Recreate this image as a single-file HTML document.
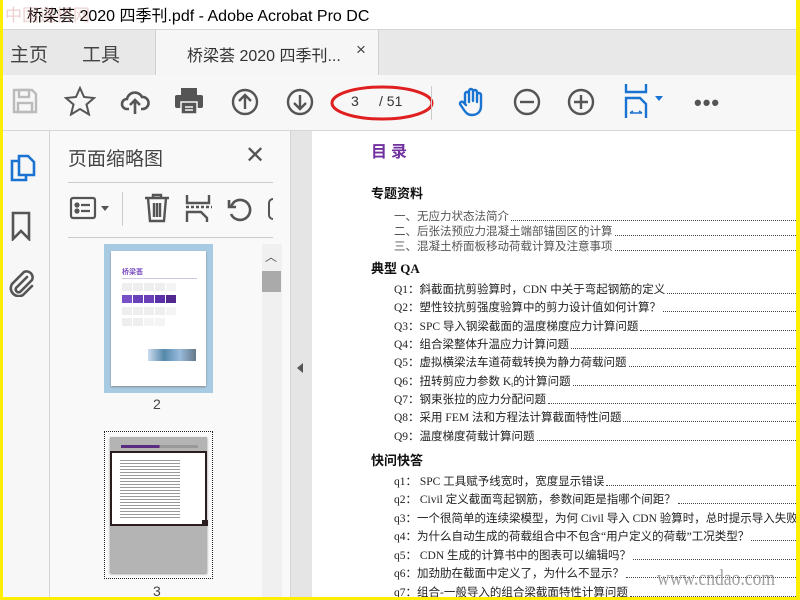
<!DOCTYPE html>
<html><head><meta charset="utf-8">
<style>
*{margin:0;padding:0;box-sizing:border-box}
body{width:800px;height:600px;overflow:hidden;background:#fff;font-family:"Liberation Sans","Noto Sans CJK SC",sans-serif;position:relative}
.abs{position:absolute}
.ico{position:absolute}
.doc .row{position:absolute;display:flex;align-items:flex-end;font-family:"Liberation Serif","Noto Sans CJK SC",serif;font-size:11.5px;color:#222;white-space:nowrap;right:0}
.doc .row .dots{flex:1;border-bottom:1px dotted #444;margin-left:2px;margin-bottom:3px}
.doc h3{position:absolute;font-size:13px;font-weight:bold;color:#111;font-family:"Liberation Serif","Noto Sans CJK SC",serif}
.tile{position:absolute;width:10px;height:8px}
</style></head><body>
<div class="abs" style="left:0;top:0;width:3px;height:600px;background:#ffee00;z-index:9"></div>
<div class="abs" style="right:0;top:0;width:4px;height:600px;background:#ffee00;z-index:9"></div>
<div class="abs" style="left:0;bottom:0;width:800px;height:3px;background:#ffee00;z-index:9"></div>
<div class="abs" style="left:27px;top:2px;font-size:16px;color:#000">桥梁荟 2020 四季刊.pdf - Adobe Acrobat Pro DC</div>
<div class="abs" style="left:5px;top:1px;font-size:17px;color:rgba(200,120,120,.35)">中国道桥网</div>
<div class="abs" style="left:3px;top:29px;width:793px;height:46px;background:#e8e8e8;border-top:1px solid #d6d6d6"></div>
<div class="abs" style="left:10px;top:40px;font-size:19px;color:#444">主页</div>
<div class="abs" style="left:82px;top:40px;font-size:19px;color:#444">工具</div>
<div class="abs" style="left:155px;top:30px;width:224px;height:45px;background:#f6f6f6;border-left:1px solid #d0d0d0;border-right:1px solid #d0d0d0"></div>
<div class="abs" style="left:187px;top:42px;font-size:16px;color:#333">桥梁荟 2020 四季刊...</div>
<div class="abs" style="left:356px;top:40px;font-size:17px;color:#444">×</div>
<div class="abs" style="left:3px;top:75px;width:793px;height:56px;background:#f7f7f7;border-bottom:1px solid #d6d6d6"></div>
<svg class="ico" style="left:10px;top:86px" width="30" height="30" viewBox="0 0 30 30" fill="none" stroke="#bbb" stroke-width="2.4"><path d="M4 4h18l4 4v18H4z"/><rect x="9" y="4" width="10" height="7"/><rect x="8" y="17" width="14" height="9"/></svg>
<svg class="ico" style="left:64px;top:86px" width="32" height="30" viewBox="0 0 32 30" fill="none" stroke="#555" stroke-width="2"><path d="M16 2l4 9 10 1-7.5 6.5 2.5 10L16 23l-9 5.5 2.5-10L2 12l10-1z"/></svg>
<svg class="ico" style="left:120px;top:87px" width="30" height="30" viewBox="0 0 30 30" fill="none" stroke="#555" stroke-width="2.6"><path d="M9 22H7a5 5 0 0 1 0-10 8 8 0 0 1 15-2 6 6 0 0 1 1 12h-2"/><path d="M15 27V13M10 18l5-5 5 5"/></svg>
<svg class="ico" style="left:174px;top:86px" width="30" height="30" viewBox="0 0 30 30"><rect x="7" y="2" width="16" height="7" fill="#555"/><rect x="1" y="9" width="28" height="13" rx="2" fill="#555"/><rect x="7" y="16" width="16" height="12" fill="#555" stroke="#f7f7f7" stroke-width="1.5"/><path d="M11 21h8M11 24h8" stroke="#f7f7f7" stroke-width="1.5"/></svg>
<svg class="ico" style="left:231px;top:88px" width="28" height="28" viewBox="0 0 28 28" fill="none" stroke="#555" stroke-width="2.4"><circle cx="14" cy="14" r="12"/><path d="M14 21V7M8 13l6-6 6 6"/></svg>
<svg class="ico" style="left:286px;top:88px" width="28" height="28" viewBox="0 0 28 28" fill="none" stroke="#555" stroke-width="2.4"><circle cx="14" cy="14" r="12"/><path d="M14 7v14M8 15l6 6 6-6"/></svg>
<div class="abs" style="left:351px;top:93px;font-size:14px;color:#333">3</div>
<div class="abs" style="left:379px;top:93px;font-size:14px;color:#333">/ 51</div>
<svg class="ico" style="left:330px;top:82px" width="106" height="42" viewBox="0 0 106 42"><ellipse cx="52" cy="21" rx="50" ry="16" fill="none" stroke="#e02020" stroke-width="3"/></svg>
<div class="abs" style="left:431px;top:86px;width:1px;height:34px;background:#ccc"></div>
<svg class="ico" style="left:456px;top:86px" width="32" height="32" viewBox="0 0 32 32" fill="none" stroke="#1a73d0" stroke-width="2.4" stroke-linecap="round"><path d="M9 18V8a2 2 0 0 1 4 0v8M13 15V5a2 2 0 0 1 4 0v10M17 15V6a2 2 0 0 1 4 0v10M21 16V9a2 2 0 0 1 4 0v11c0 6-4 9-9 9-4 0-6-2-8-5l-4-6a2 2 0 0 1 3-2l3 3"/></svg>
<svg class="ico" style="left:513px;top:88px" width="28" height="28" viewBox="0 0 28 28" fill="none" stroke="#555" stroke-width="2.4"><circle cx="14" cy="14" r="12"/><path d="M7 14h14"/></svg>
<svg class="ico" style="left:567px;top:88px" width="28" height="28" viewBox="0 0 28 28" fill="none" stroke="#555" stroke-width="2.4"><circle cx="14" cy="14" r="12"/><path d="M7 14h14M14 7v14"/></svg>
<svg class="ico" style="left:624px;top:84px" width="40" height="34" viewBox="0 0 40 34" fill="none" stroke="#1a73d0" stroke-width="2.4"><path d="M2 0v8h20V0"/><path d="M2 34V14h14l6 6v14"/><path d="M6 29h12M6 29l3-2M18 29l-3-2" stroke-width="1.6"/><path d="M31 12h8l-4 5z" fill="#1a73d0" stroke="none"/></svg>
<div class="abs" style="left:694px;top:90px;font-size:22px;color:#555;letter-spacing:1px;font-weight:bold">•••</div>
<div class="abs" style="left:3px;top:131px;width:47px;height:469px;background:#f7f7f7;border-right:1px solid #d4d4d4"></div>
<svg class="ico" style="left:9px;top:153px" width="28" height="30" viewBox="0 0 28 30" fill="none" stroke="#1a73d0" stroke-width="2.6"><path d="M10 3h9l6 6v13H10z"/><path d="M10 8H3v19h14v-5"/></svg>
<svg class="ico" style="left:10px;top:211px" width="22" height="30" viewBox="0 0 22 30" fill="none" stroke="#555" stroke-width="2.6"><path d="M3 2h16v26l-8-8-8 8z"/></svg>
<svg class="ico" style="left:7px;top:267px" width="28" height="30" viewBox="0 0 28 30" fill="none" stroke="#555" stroke-width="2.6" stroke-linecap="round"><path d="M20 10L9 21a3 3 0 0 0 4 4l12-12a6 6 0 0 0-8-8L5 17a8 8 0 0 0 11 11l9-9"/></svg>
<div class="abs" style="left:50px;top:131px;width:240px;height:469px;background:#f9f9f9"></div>
<div class="abs" style="left:68px;top:144px;font-size:19px;color:#444">页面缩略图</div>
<div class="abs" style="left:245px;top:141px;font-size:24px;color:#555">✕</div>
<div class="abs" style="left:68px;top:182px;width:205px;height:1px;background:#ccc"></div>
<div class="abs" style="left:68px;top:237px;width:205px;height:1px;background:#ccc"></div>
<svg class="ico" style="left:69px;top:196px" width="44" height="26" viewBox="0 0 44 26" fill="none" stroke="#555" stroke-width="2.2"><rect x="2" y="2" width="24" height="20" rx="2"/><circle cx="8" cy="9" r="1.5" fill="#555"/><circle cx="8" cy="15" r="1.5" fill="#555"/><path d="M12 9h9M12 15h9"/><path d="M32 10h8l-4 5z" fill="#555" stroke="none"/></svg>
<div class="abs" style="left:122px;top:192px;width:1px;height:34px;background:#ccc"></div>
<svg class="ico" style="left:143px;top:193px" width="28" height="30" viewBox="0 0 28 30" fill="none" stroke="#555" stroke-width="2.4"><path d="M2 5h24M10 5V2h8v3M5 5l2 23h14l2-23M11 10v14M14 10v14M17 10v14" /></svg>
<svg class="ico" style="left:185px;top:194px" width="28" height="30" viewBox="0 0 28 30" fill="none" stroke="#555" stroke-width="2.4"><path d="M2 1v8h22V1M2 28V18h14l6 6v4"/><path d="M1 13h26" stroke-dasharray="3 2"/></svg>
<svg class="ico" style="left:226px;top:196px" width="28" height="28" viewBox="0 0 28 28" fill="none" stroke="#555" stroke-width="2.6"><path d="M5 18A10 10 0 1 0 8 6L5 10"/><path d="M3 4v7h7"/></svg>
<div class="abs" style="left:268px;top:198px;width:5px;height:22px;border:2.5px solid #555;border-right:none;border-radius:10px 0 0 10px"></div>
<!-- thumbnail 2 -->
<div class="abs" style="left:104px;top:244px;width:109px;height:149px;background:#a8cbe4"></div>
<div class="abs" style="left:111px;top:251px;width:95px;height:135px;background:#fff;box-shadow:0 1px 2px #888"></div>
<div class="abs" style="left:122px;top:267px;font-size:7px;color:#7b4fc0;font-weight:bold">桥梁荟</div>
<div class="abs" style="left:122px;top:278px;width:75px;height:1px;background:#cfc6e6"></div>
<div class="tile" style="left:122px;top:283px;background:#eee"></div><div class="tile" style="left:133px;top:283px;background:#eee"></div><div class="tile" style="left:144px;top:283px;background:#eee"></div><div class="tile" style="left:155px;top:283px;background:#eee"></div><div class="tile" style="left:166px;top:283px;background:#f4f4f4"></div>
<div class="tile" style="left:122px;top:295px;background:#7a50c8"></div><div class="tile" style="left:133px;top:295px;background:#6a40b8"></div><div class="tile" style="left:144px;top:295px;background:#6a40b8"></div><div class="tile" style="left:155px;top:295px;background:#5a30a8"></div><div class="tile" style="left:166px;top:295px;background:#502890"></div>
<div class="tile" style="left:122px;top:307px;background:#eee"></div><div class="tile" style="left:133px;top:307px;background:#eee"></div><div class="tile" style="left:144px;top:307px;background:#eee"></div><div class="tile" style="left:155px;top:307px;background:#eee"></div><div class="tile" style="left:166px;top:307px;background:#f4f4f4"></div>
<div class="tile" style="left:122px;top:318px;background:#eee"></div><div class="tile" style="left:133px;top:318px;background:#eee"></div><div class="tile" style="left:144px;top:318px;background:#f4f4f4"></div><div class="tile" style="left:155px;top:318px;background:#f4f4f4"></div>
<div class="abs" style="left:148px;top:349px;width:48px;height:12px;background:linear-gradient(90deg,#cde,#58a,#9bd,#678)"></div>
<div class="abs" style="left:153px;top:396px;font-size:14px;color:#444">2</div>
<!-- thumbnail 3 -->
<div class="abs" style="left:104px;top:431px;width:109px;height:148px;border:1px dotted #222"></div>
<div class="abs" style="left:110px;top:437px;width:97px;height:136px;background:#b4b4b4;box-shadow:0 1px 2px #888"></div>
<div class="abs" style="left:121px;top:445px;width:77px;height:3px;background:linear-gradient(90deg,#5a2d82 50%,#999 50%)"></div>
<div class="abs" style="left:110px;top:451px;width:97px;height:75px;background:#fff;border:2px solid #2a1e1e"></div>
<div class="abs" style="left:120px;top:460px;width:60px;height:60px;background:repeating-linear-gradient(#555 0 1px,transparent 1px 3px);opacity:.6"></div>
<div class="abs" style="left:202px;top:520px;width:6px;height:6px;background:#2a1e1e"></div>
<div class="abs" style="left:153px;top:583px;font-size:14px;color:#444">3</div>
<div class="abs" style="left:262px;top:244px;width:20px;height:356px;background:#f0f0f0"></div>
<div class="abs" style="left:265px;top:248px;font-size:12px;color:#555">︿</div>
<div class="abs" style="left:262px;top:271px;width:19px;height:21px;background:#aaa"></div>
<div class="abs" style="left:290px;top:131px;width:22px;height:469px;background:#e5e5e5;border-left:1px solid #d4d4d4"></div>
<div class="abs" style="left:297px;top:363px;width:0;height:0;border-top:5px solid transparent;border-bottom:5px solid transparent;border-right:6px solid #555"></div>
<div class="abs doc" style="left:312px;top:131px;width:484px;height:469px;background:#fff">
<div class="abs" style="left:59px;top:7px;font-size:16px;font-weight:bold;color:#7030a0;letter-spacing:4px">目录</div>
<h3 style="left:59px;top:52px">专题资料</h3>
<div class="row" style="left:82px;top:77px;color:#555">一、无应力状态法简介<span class="dots"></span></div>
<div class="row" style="left:82px;top:92px;color:#555">二、后张法预应力混凝土端部锚固区的计算<span class="dots"></span></div>
<div class="row" style="left:82px;top:107px;color:#555">三、混凝土桥面板移动荷载计算及注意事项<span class="dots"></span></div>
<h3 style="left:59px;top:127px">典型 QA</h3>
<div class="row" style="left:82px;top:150px">Q1：斜截面抗剪验算时，CDN 中关于弯起钢筋的定义<span class="dots"></span></div>
<div class="row" style="left:82px;top:168px">Q2：塑性铰抗剪强度验算中的剪力设计值如何计算？<span class="dots"></span></div>
<div class="row" style="left:82px;top:187px">Q3：SPC 导入钢梁截面的温度梯度应力计算问题<span class="dots"></span></div>
<div class="row" style="left:82px;top:205px">Q4：组合梁整体升温应力计算问题<span class="dots"></span></div>
<div class="row" style="left:82px;top:223px">Q5：虚拟横梁法车道荷载转换为静力荷载问题<span class="dots"></span></div>
<div class="row" style="left:82px;top:242px">Q6：扭转剪应力参数 K<sub style="font-size:7px">t</sub> 的计算问题<span class="dots"></span></div>
<div class="row" style="left:82px;top:260px">Q7：钢束张拉的应力分配问题<span class="dots"></span></div>
<div class="row" style="left:82px;top:278px">Q8：采用 FEM 法和方程法计算截面特性问题<span class="dots"></span></div>
<div class="row" style="left:82px;top:297px">Q9：温度梯度荷载计算问题<span class="dots"></span></div>
<h3 style="left:59px;top:319px">快问快答</h3>
<div class="row" style="left:82px;top:342px">q1： SPC 工具赋予线宽时，宽度显示错误<span class="dots"></span></div>
<div class="row" style="left:82px;top:360px">q2： Civil 定义截面弯起钢筋，参数间距是指哪个间距？<span class="dots"></span></div>
<div class="row" style="left:82px;top:379px">q3：一个很简单的连续梁模型，为何 Civil 导入 CDN 验算时，总时提示导入失败？</div>
<div class="row" style="left:82px;top:397px">q4：为什么自动生成的荷载组合中不包含“用户定义的荷载”工况类型？<span class="dots"></span></div>
<div class="row" style="left:82px;top:416px">q5： CDN 生成的计算书中的图表可以编辑吗？<span class="dots"></span></div>
<div class="row" style="left:82px;top:434px">q6：加劲肋在截面中定义了，为什么不显示？<span class="dots"></span></div>
<div class="row" style="left:82px;top:453px">q7：组合-一般导入的组合梁截面特性计算问题<span class="dots"></span></div>
<div class="abs" style="left:345px;top:434px;font-family:'Liberation Serif',serif;font-size:22px;color:rgba(120,120,120,.7);transform:scaleX(.8);transform-origin:left">www.cndao.com</div>
</div>
</body></html>
